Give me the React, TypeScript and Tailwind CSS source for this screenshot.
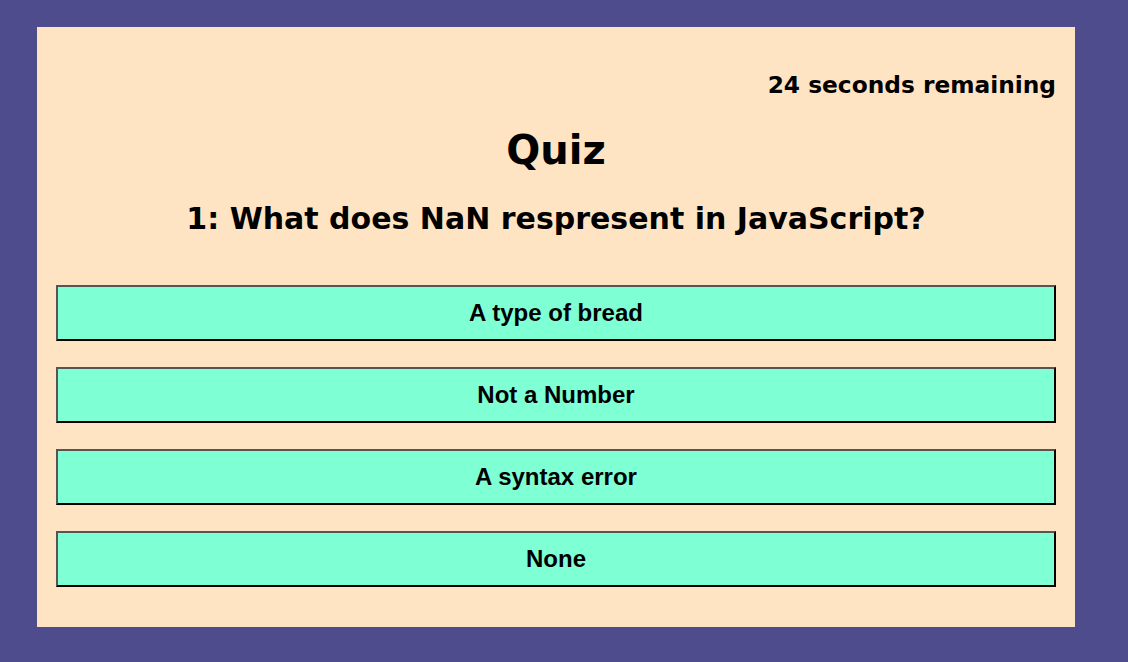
const answers = ['A type of bread', 'Not a Number', 'A syntax error', 'None'];

export default function App() {
  return (
    <div className="min-h-[662px] w-full bg-[#4e4c8c] pt-[27px] pl-[37px]">
      <div className="w-[1038px] h-[600px] bg-[#ffe4c4] px-[19px] pt-[43px] font-['DejaVu_Sans',sans-serif] font-bold text-black">
        <div className="text-right text-[23.3px] leading-[30px]">24 seconds remaining</div>
        <h1 className="mt-[25px] text-center text-[40px] leading-[50px]">Quiz</h1>
        <h2 className="mt-[24px] text-center text-[30px] leading-[40px]">1: What does NaN respresent in JavaScript?</h2>
        <div className="mt-[46px] flex flex-col gap-[26px]">
          {answers.map((a) => (
            <button
              key={a}
              className="h-[56px] w-full bg-[#7fffd4] border-2 border-t-[#555] border-l-[#555] border-r-black border-b-black font-['Liberation_Sans',Arial,sans-serif] text-[24px] font-bold"
            >
              {a}
            </button>
          ))}
        </div>
      </div>
    </div>
  );
}
